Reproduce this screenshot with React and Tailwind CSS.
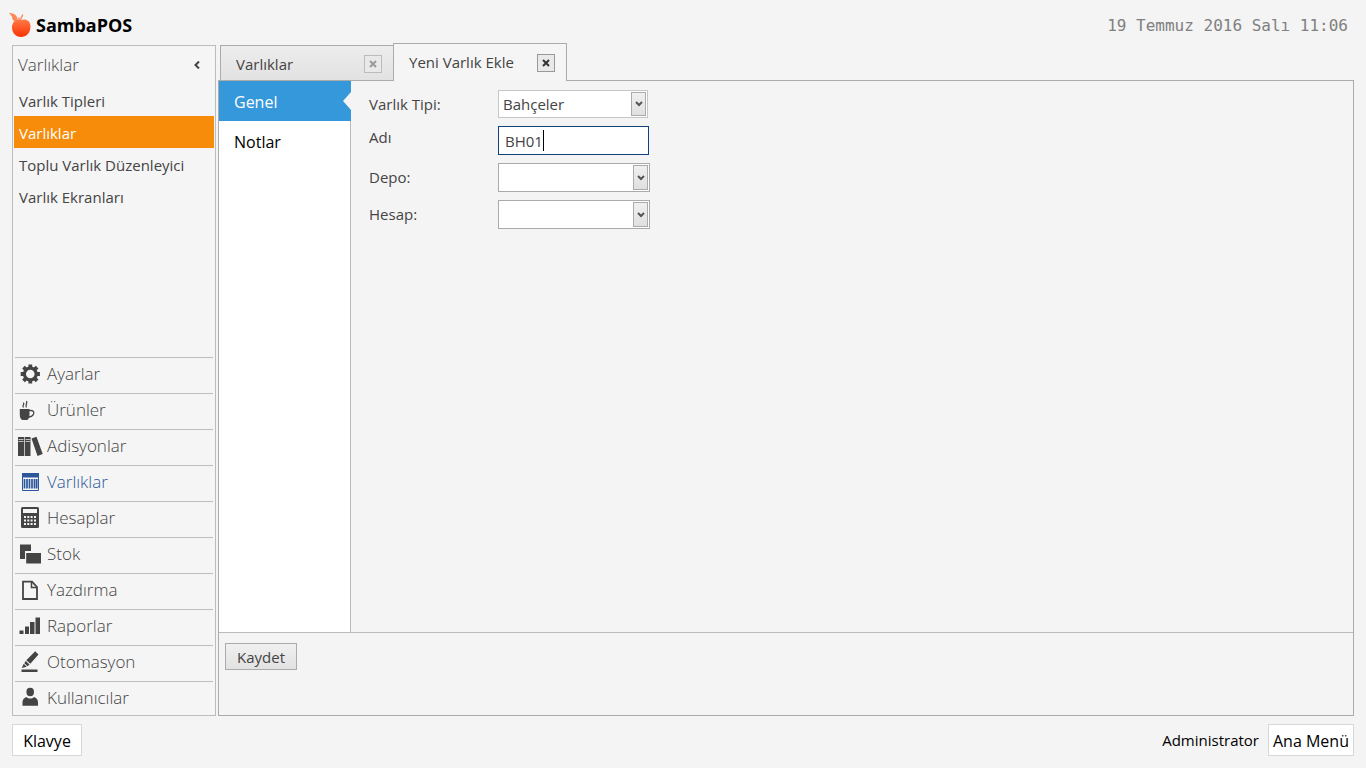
import { useState } from 'react'

const menuItems = ['Varlık Tipleri', 'Varlıklar', 'Toplu Varlık Düzenleyici', 'Varlık Ekranları'];

function Logo() {
    return (
        <svg width="24" height="28" viewBox="0 0 24 28" aria-hidden="true">
            <defs>
                <linearGradient id="fruit" x1="0" y1="0" x2="0" y2="1">
                    <stop offset="0" stopColor="#ff7a45" />
                    <stop offset="1" stopColor="#fb3204" />
                </linearGradient>
            </defs>
            <path d="M1 1 C6 1 9.500 3 10 9 L9.800 10.500 C6 10 4 8 4 4.800 C3.200 3.200 2.200 2.400 1 1 Z" fill="#ff8658" />
            <path d="M11 9.500 L11 5.500 M12 9 L14.800 2.500" stroke="#ff8658" strokeWidth="1.400" fill="none" />
            <path d="M12.500 8.500 C16 6.500 22.500 7.500 22.500 14.500 C22.500 21 18 25 13 25 C8 25 4 21 4 15.500 C4 9 9 7 12.500 8.500 Z" fill="url(#fruit)" />
        </svg>
    );
}

const icons = {
    gear: (
        <>
            <circle cx="12.300" cy="12" r="5.900" fill="none" stroke="currentColor" strokeWidth="3.200" />
            <path
                d="M12.300 2.400V6M12.300 18V21.600M2.700 12H6.300M18.300 12H21.900M5.500 5.200L8 7.700M16.600 16.300L19.100 18.800M19.100 5.200L16.600 7.700M8 16.300L5.500 18.800"
                stroke="currentColor"
                strokeWidth="3.800"
            />
        </>
    ),
    cup: (
        <>
            <path d="M1.800 11H11.500V17C11.500 20 10 22 8.500 22H5C3.300 22 1.800 20 1.800 17Z" fill="currentColor" />
            <path d="M11 12.500H13C16 12.500 16.500 15 15 17C14 18.300 12.500 18.800 11 19" fill="none" stroke="currentColor" strokeWidth="1.300" />
            <path d="M5.500 9.500C3.500 7.500 7 6.500 5.500 4.500M8.500 9.500C6.500 7 10 6 8.500 3" fill="none" stroke="currentColor" strokeWidth="1.200" />
        </>
    ),
    books: (
        <>
            <path d="M0 3H6V22H0ZM6.700 3H12.500V22H6.700ZM13.500 4.500L18.500 2.700L24.700 20L19.500 22Z" fill="currentColor" />
            <path d="M0.500 5.500H5.500M0.500 7.500H5.500M7.500 5.500H12M7.500 7.500H12" stroke="#f5f5f5" strokeWidth="0.700" />
        </>
    ),
    barcode: (
        <>
            <path d="M4.500 3.500H20.500V20.500H4.500Z" fill="none" stroke="currentColor" strokeWidth="1" />
            <path d="M4 3H21V7.500H4Z" fill="currentColor" />
            <path d="M6.500 9V18.500M9 9V18.500M11.500 9V18.500M14 9V18.500M16.500 9V18.500M18.700 9V18.500" stroke="currentColor" strokeWidth="1.700" />
        </>
    ),
    calculator: (
        <>
            <rect x="3" y="1" width="18" height="21" rx="1.500" fill="currentColor" />
            <path
                d="M5 3H19V7H5ZM6 10H8V12H6ZM9.300 10H11.300V12H9.300ZM12.600 10H14.600V12H12.600ZM16 10H18V12H16ZM6 13.500H8V15.500H6ZM9.300 13.500H11.300V15.500H9.300ZM12.600 13.500H14.600V15.500H12.600ZM16 13.500H18V15.500H16ZM6 17H8V19H6ZM9.300 17H11.300V19H9.300ZM12.600 17H14.600V19H12.600ZM16 17H18V19H16Z"
                fill="#f5f5f5"
            />
        </>
    ),
    stock: <path d="M2 2.500H13V9H7V17H2ZM8.200 11H23V21.500H8.200Z" fill="currentColor" />,
    file: (
        <>
            <path d="M5 3.700H14L19 9V21H5Z" fill="none" stroke="currentColor" strokeWidth="1.800" />
            <path d="M13.500 4V9.500H19" fill="none" stroke="currentColor" strokeWidth="1.500" />
        </>
    ),
    bars: <path d="M1.500 16.500H5.500V20H1.500ZM7 12.500H11V20H7ZM12 8H16.500V20H12ZM17.500 3.500H22V20H17.500Z" fill="currentColor" />,
    pencil: (
        <path
            d="M17.200 1.200L20.500 4.500L12.300 13.800L8.300 10.200ZM7.700 10.900L11.500 14.400L9.700 16.300L6.300 13.200ZM5.700 13.800L8.800 16.700L3.700 18ZM3.500 19.500H19.500V22H3.500Z"
            fill="currentColor"
        />
    ),
    user: (
        <>
            <ellipse cx="12.200" cy="6" rx="3.800" ry="4.200" fill="currentColor" />
            <path d="M4.500 19.700V16C4.500 13.500 6.500 11.500 8.500 11C10.500 13 14 13 16 11C18 11.500 20 13.500 20 16V19.700Z" fill="currentColor" />
        </>
    ),
};

const sections = [
    { name: 'Ayarlar', icon: 'gear' },
    { name: 'Ürünler', icon: 'cup' },
    { name: 'Adisyonlar', icon: 'books' },
    { name: 'Varlıklar', icon: 'barcode' },
    { name: 'Hesaplar', icon: 'calculator' },
    { name: 'Stok', icon: 'stock' },
    { name: 'Yazdırma', icon: 'file' },
    { name: 'Raporlar', icon: 'bars' },
    { name: 'Otomasyon', icon: 'pencil' },
    { name: 'Kullanıcılar', icon: 'user' },
];

function Sidebar() {
    const [selected, setSelected] = useState('Varlıklar');

    return (
        <aside className="flex w-[204px] shrink-0 flex-col border border-[#bcbcbc] bg-[#f5f5f5]">
            <div className="flex h-[38px] items-center justify-between pr-[6px] pl-[5px]">
                <h2 className="text-[17px] font-light text-[#444]">Varlıklar</h2>
                <button type="button" aria-label="Daralt" className="flex h-4 w-4 items-center">
                    <svg width="8" height="8" viewBox="0 0 8 8" fill="none" stroke="#444" strokeWidth="2" aria-hidden="true">
                        <path d="M6 0.500L2.500 4L6 7.500" />
                    </svg>
                </button>
            </div>
            <ul className="px-px">
                {menuItems.map((item) => (
                    <li key={item}>
                        <button
                            type="button"
                            onClick={() => setSelected(item)}
                            className={`flex h-8 w-full items-center pt-[2px] pl-[5px] text-[15px] whitespace-nowrap ${selected === item ? 'bg-[#f78c0a] text-white' : 'text-[#444]'}`}
                        >
                            {item}
                        </button>
                    </li>
                ))}
            </ul>
            <nav className="mt-auto px-[2px]">
                {sections.map((section) => (
                    <a
                        key={section.name}
                        href="#"
                        className={`flex h-9 items-center gap-[5px] border-t border-[#bcbcbc] pb-[3px] pl-[3px] text-[17px] font-light last:h-[34px] last:pb-px ${section.name === 'Varlıklar' ? 'text-[#2b579a]' : 'text-[#444]'}`}
                    >
                        <svg width="24" height="24" viewBox="0 0 24 24" className="shrink-0 overflow-visible" aria-hidden="true">
                            {icons[section.icon]}
                        </svg>
                        {section.name}
                    </a>
                ))}
            </nav>
        </aside>
    );
}

function CloseButton({ active }) {
    return (
        <button
            type="button"
            aria-label="Kapat"
            className={`flex h-[18px] w-[18px] items-center justify-center border bg-[#e9e9e9] ${active ? 'border-[#999] text-[#333]' : 'border-[#bcbcbc] text-[#999]'}`}
        >
            <svg width="8" height="8" viewBox="0 0 8 8" stroke="currentColor" strokeWidth="2" aria-hidden="true">
                <path d="M1 1L7 7M7 1L1 7" />
            </svg>
        </button>
    );
}

function SelectBox({ id, options, compact }) {
    return (
        <div className={`relative ${compact ? 'h-7 w-[150px]' : 'h-[29px] w-[152px]'}`}>
            <select
                id={id}
                className={`h-full w-full appearance-none border bg-white pr-5 pl-1 text-[15px] text-[#444] outline-none ${compact ? 'border-[#c6c6c6]' : 'border-[#ababab]'}`}
            >
                {options.map((option) => (
                    <option key={option}>{option}</option>
                ))}
            </select>
            <span className="pointer-events-none absolute top-[2px] right-[2px] bottom-[2px] flex w-[15px] items-center justify-center border border-[#ababab] bg-linear-to-b from-[#f0f0f0] to-[#e0e0e0]">
                <svg width="8" height="6" viewBox="0 0 8 6" fill="none" stroke="#555" strokeWidth="2" aria-hidden="true">
                    <path d="M1 1L4 4L7 1" />
                </svg>
            </span>
        </div>
    );
}

function EntityForm() {
    const [name, setName] = useState('BH01');

    return (
        <form className="grid flex-1 grid-cols-[129px_1fr] content-start items-center gap-y-2 pt-[9px] pl-[18px] text-[15px] text-[#444]">
            <label htmlFor="entity-type">Varlık Tipi:</label>
            <SelectBox id="entity-type" options={['Bahçeler']} compact />

            <label htmlFor="entity-name" className="self-start">Adı</label>
            <div className="relative h-[29px] w-[151px]">
                <input
                    id="entity-name"
                    type="text"
                    value={name}
                    onChange={(e) => setName(e.target.value)}
                    className="h-full w-full border border-[#124078] bg-white pl-[6px] text-[15px] caret-transparent outline-none"
                />
                {/* caret follows the typed text */}
                <span className="pointer-events-none absolute top-1 left-[7px] flex h-[21px] border-r border-black" aria-hidden="true">
                    <span className="invisible">{name}</span>
                </span>
            </div>

            <label htmlFor="warehouse">Depo:</label>
            <SelectBox id="warehouse" options={['']} />

            <label htmlFor="account">Hesap:</label>
            <SelectBox id="account" options={['']} />
        </form>
    );
}

function App() {
    return (
        <div className="flex min-h-screen flex-col bg-[#f4f4f4] px-3 pb-3 font-['Open_Sans','Noto_Sans',sans-serif] text-black">
            <header className="flex h-[43px] items-center justify-between pt-2 pr-[6px]">
                <div className="-ml-1 flex items-center gap-1">
                    <Logo />
                    <h1 className="text-[18px] font-bold">SambaPOS</h1>
                </div>
                <time dateTime="2016-07-19T11:06" className="font-['DejaVu_Sans_Mono','Liberation_Mono',monospace] text-[16px] text-[#808080]">
                    19 Temmuz 2016 Salı 11:06
                </time>
            </header>

            <div className="flex flex-1 gap-[2px]">
                <div className="flex pt-[2px]">
                    <Sidebar />
                </div>
                <main className="flex flex-1 flex-col">
                    <div className="z-10 flex items-end pl-[2px] text-[15px] text-[#444]">
                        <div className="flex h-[36px] w-[173px] items-center justify-between border border-r-0 border-[#ababab] bg-linear-to-b from-[#ededed] to-[#e2e2e2] pt-[2px] pr-[11px] pl-[15px]">
                            <button type="button">Varlıklar</button>
                            <CloseButton />
                        </div>
                        <div className="flex h-[38px] w-[174px] items-center justify-between border border-b-0 border-[#ababab] bg-[#f5f5f5] pr-[11px] pl-[15px]">
                            <button type="button">Yeni Varlık Ekle</button>
                            <CloseButton active />
                        </div>
                    </div>

                    <section className="-mt-px flex flex-1 flex-col border border-[#ababab]">
                        <div className="flex flex-1">
                            <div className="w-[132px] shrink-0 border-r border-[#bcbcbc] bg-white">
                                <button type="button" className="-mr-px flex h-10 w-[132px] items-center justify-between bg-[#3498db] pl-[15px] text-base text-white">
                                    <span className="pt-[2px]">Genel</span>
                                    <svg width="8" height="18" viewBox="0 0 8 18" aria-hidden="true">
                                        <path d="M8 0V18L0 9Z" fill="#f4f4f4" />
                                    </svg>
                                </button>
                                <button type="button" className="flex h-10 w-full items-center pt-[2px] pl-[15px] text-base">
                                    Notlar
                                </button>
                            </div>
                            <EntityForm />
                        </div>
                        <div className="h-[83px] border-t border-[#bcbcbc] pt-[10px] pl-[6px]">
                            <button type="button" className="h-[27px] w-[72px] border border-[#ababab] bg-linear-to-b from-[#f0f0f0] to-[#e2e2e2] pt-[2px] text-[15px] text-[#444]">
                                Kaydet
                            </button>
                        </div>
                    </section>
                </main>
            </div>

            <footer className="flex items-center pt-2">
                <button type="button" className="h-8 w-[70px] border border-[#d8d8d8] bg-white pt-[2px] text-base">
                    Klavye
                </button>
                <span className="mr-[9px] ml-auto text-[15px]">Administrator</span>
                <button type="button" className="h-8 w-[86px] border border-[#d8d8d8] bg-white pt-[2px] text-base whitespace-nowrap">
                    Ana Menü
                </button>
            </footer>
        </div>
    );
}

export default App;
